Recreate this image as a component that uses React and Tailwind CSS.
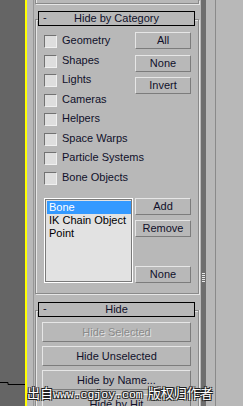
import React from "react";

const categories = [
  "Geometry",
  "Shapes",
  "Lights",
  "Cameras",
  "Helpers",
  "Space Warps",
  "Particle Systems",
  "Bone Objects",
];

const listItems = ["Bone", "IK Chain Object", "Point"];

function MaxButton({ children, className = "", disabled = false }) {
  return (
    <div
      className={`flex shrink-0 items-center justify-center whitespace-nowrap border border-t-[#e6e6e6] border-l-[#e6e6e6] border-r-[#7c7c7c] border-b-[#7c7c7c] bg-[#b8b8b8] leading-none ${
        disabled ? "text-[#8a8a8a] [text-shadow:1px_1px_0_#e2e2e2]" : "text-[#10102a]"
      } ${className}`}
    >
      {children}
    </div>
  );
}

function RolloutHeader({ title }) {
  return (
    <div className="-mt-[9px] ml-[2px] flex h-[15px] w-[157px] shrink-0 items-center border border-black bg-[#b8b8b8] leading-none">
      <span className="w-[14px] pl-[4px] pb-[2px]">-</span>
      <span className="flex-1 text-center">{title}</span>
      <span className="w-[14px]" />
    </div>
  );
}

function Checkbox({ label }) {
  return (
    <div className="flex h-[19.5px] shrink-0 items-start">
      <div className="h-[13px] w-[13px] shrink-0 border border-t-[#727272] border-l-[#727272] border-r-[#f0f0f0] border-b-[#f0f0f0] bg-[#dedede]" />
      <span className="ml-[5px] -mt-[1px] whitespace-nowrap leading-[13px]">{label}</span>
    </div>
  );
}

export default function App() {
  return (
    <div className="relative flex h-[406px] w-[243px] overflow-hidden bg-[#b8b8b8] font-['Liberation_Sans',Arial,sans-serif] text-[11px] text-[#10102a]">
      {/* viewport edge */}
      <div className="w-[25px] bg-[#656565]">
        <svg width="25" height="406" className="block">
          <polyline points="0,382.5 8,382.5 8,384.5 25,384.5" fill="none" stroke="#000" strokeWidth="1" />
        </svg>
      </div>
      <div className="w-[2px] bg-[#ffff00]" />
      <div className="w-[6px]" />

      {/* command panel column */}
      <div className="flex w-[168px] flex-col overflow-hidden border-l border-[#969696]">
        {/* previous rollout end */}
        <div className="ml-[1px] h-[4px] w-[164px] shrink-0 border-x border-b border-[#8a8a8a] shadow-[inset_1px_0_0_#e6e6e6,1px_1px_0_#e6e6e6]" />

        {/* Hide by Category */}
        <div className="ml-[1px] mt-[15px] flex w-[164px] shrink-0 flex-col border border-[#8a8a8a] pb-[10px] shadow-[inset_1px_1px_0_#e6e6e6,1px_1px_0_#e6e6e6]">
          <RolloutHeader title="Hide by Category" />
          <div className="mt-[9px] flex">
            <div className="ml-[8px] flex w-[91px] shrink-0 flex-col">
              {categories.map((c) => (
                <Checkbox key={c} label={c} />
              ))}
            </div>
            <div className="-mt-[3px] flex flex-col gap-[5px]">
              <MaxButton className="h-[17px] w-[56px]">All</MaxButton>
              <MaxButton className="mt-[1px] h-[17px] w-[56px]">None</MaxButton>
              <MaxButton className="h-[17px] w-[56px]">Invert</MaxButton>
            </div>
          </div>
          <div className="mt-[7px] flex">
            <div className="ml-[8px] h-[85px] w-[89px] shrink-0 border border-white">
              <div className="h-full w-full border border-[#7a7a7a] bg-[#e2e2e2] pl-px pt-px">
                {listItems.map((item, i) => (
                  <div
                    key={item}
                    className={`h-[13px] whitespace-nowrap pl-[2px] leading-[13px] ${
                      i === 0 ? "bg-[#3399ff] text-white" : "text-black"
                    }`}
                  >
                    {item}
                  </div>
                ))}
              </div>
            </div>
            <div className="ml-[2px] flex flex-col">
              <MaxButton className="h-[17px] w-[56px]">Add</MaxButton>
              <MaxButton className="mt-[5px] h-[17px] w-[56px]">Remove</MaxButton>
              <MaxButton className="mt-[29px] h-[17px] w-[56px]">None</MaxButton>
            </div>
          </div>
        </div>

        {/* Hide */}
        <div className="ml-[1px] mt-[16px] flex w-[164px] shrink-0 flex-col border-x border-t border-[#8a8a8a] shadow-[inset_1px_1px_0_#e6e6e6,1px_0_0_#e6e6e6]">
          <RolloutHeader title="Hide" />
          <div className="ml-[6px] mt-[5px] flex flex-col gap-[4px]">
            <MaxButton disabled className="h-[20px] w-[149px]">Hide Selected</MaxButton>
            <MaxButton className="h-[20px] w-[149px]">Hide Unselected</MaxButton>
            <MaxButton className="h-[20px] w-[149px]">Hide by Name...</MaxButton>
            <MaxButton className="h-[20px] w-[149px]">Hide by Hit</MaxButton>
          </div>
        </div>
      </div>

      {/* scrollbar strip */}
      <div className="flex w-[5px] flex-col items-center bg-[#6e6e6e] pt-[273px]">
        {[0, 1, 2, 3, 4].map((i) => (
          <div key={i} className="mb-[1px] h-px w-[3px] bg-[#e8e8e8]" />
        ))}
      </div>
      <div className="w-[9px]" />
      <div className="w-px bg-[#8a8a8a]" />
      <div className="flex-1" />

      {/* watermark */}
      <div className="absolute left-[27px] top-[385px] flex items-baseline whitespace-nowrap leading-[16px] text-white [text-shadow:1px_1px_0_#222,-1px_-1px_0_#222,1px_-1px_0_#222,-1px_1px_0_#222]">
        <span className="font-['Noto_Sans_CJK_SC',sans-serif] text-[13px]">出自</span>
        <span className="font-['Liberation_Mono',monospace] text-[11.5px]">www.cgjoy.com</span>
        <span className="ml-[5px] font-['Noto_Sans_CJK_SC',sans-serif] text-[13px]">版权归作者</span>
      </div>
    </div>
  );
}
